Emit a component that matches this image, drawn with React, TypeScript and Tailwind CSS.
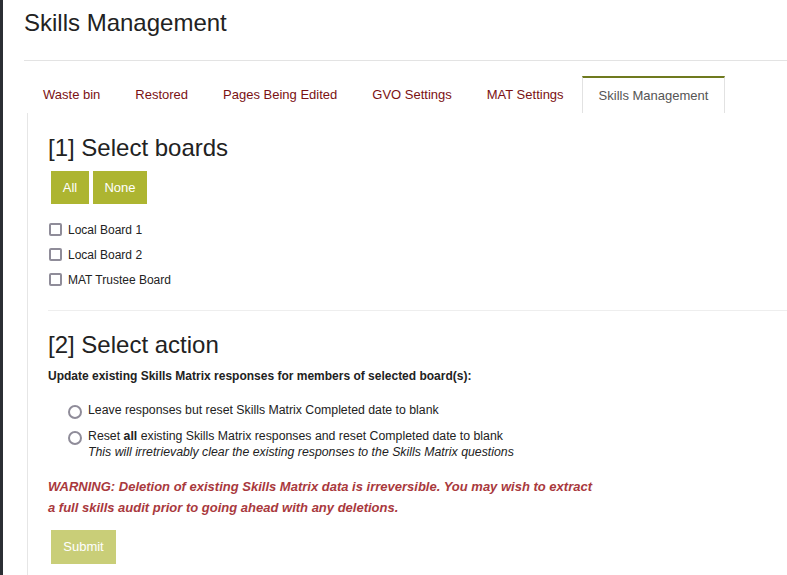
const tabs = ['Waste bin', 'Restored', 'Pages Being Edited', 'GVO Settings', 'MAT Settings', 'Skills Management'];
const boards = ['Local Board 1', 'Local Board 2', 'MAT Trustee Board'];

function Checkbox() {
  return <span className="block h-[13px] w-[13px] shrink-0 rounded-[2px] border-2 border-[#8f8c99] bg-white" />;
}

function Radio() {
  return <span className="mt-[3px] block h-[14px] w-[14px] shrink-0 rounded-full border-2 border-[#8f8c99] bg-white" />;
}

export default function App() {
  const active = 'Skills Management';

  return (
    <div className="flex min-h-screen bg-white font-['Liberation_Sans',Arial,sans-serif] text-[#333]">
      <div className="w-[3px] shrink-0 bg-[#2b2f34]" />
      <div className="flex-1 pl-[21px]">
        <h1 className="pt-[8px] text-[24px] leading-[30px] text-[#222]">Skills Management</h1>
        <div className="mt-[22px] h-px bg-[#e3e3e3]" />

        {/* Tabs */}
        <div className="mt-[15px] flex pl-[3px]">
          {tabs.map((t) =>
            t === active ? (
              <div
                key={t}
                className="-ml-px flex h-[37px] items-center border-x border-t-2 border-x-[#e2e2e2] border-t-[#6f7a1e] px-4 text-[13px] text-[#555]"
              >
                {t}
              </div>
            ) : (
              <div key={t} className="mr-[3px] flex h-[37px] items-center px-4 text-[13px] text-[#7b1113]">
                {t}
              </div>
            )
          )}
        </div>

        {/* Content */}
        <div className="ml-[3px] border-l border-[#e6e6e6] pb-[20px] pl-[20px]">
          <h2 className="pt-[21px] text-[24px] leading-[28px] text-[#222]">[1] Select boards</h2>
          <div className="ml-[3px] mt-[9px] flex gap-[4px]">
            <button className="h-[33px] w-[38px] bg-[#adb531] text-[13px] text-white">All</button>
            <button className="h-[33px] w-[54px] bg-[#adb531] text-[13px] text-white">None</button>
          </div>

          <div className="mt-[13px]">
            {boards.map((b) => (
              <label key={b} className="ml-[1px] flex h-[25px] items-center gap-[6px] text-[12px] text-[#222]">
                <Checkbox />
                <span>{b}</span>
              </label>
            ))}
          </div>

          <div className="mt-[18px] h-px bg-[#eeeeee]" />

          <h2 className="mt-[20px] text-[24px] leading-[28px] text-[#222]">[2] Select action</h2>
          <div className="mt-[9px] text-[12px] font-bold leading-[16px] text-[#222]">
            Update existing Skills Matrix responses for members of selected board(s):
          </div>

          <div className="ml-[20px] mt-[18px] text-[12.3px] leading-[16px] text-[#222]">
            <label className="flex gap-[6px]">
              <Radio />
              <span>Leave responses but reset Skills Matrix Completed date to blank</span>
            </label>
            <label className="mt-[9px] flex gap-[6px]">
              <Radio />
              <span>
                Reset <b>all</b> existing Skills Matrix responses and reset Completed date to blank
                <br />
                <i>This will irretrievably clear the existing responses to the Skills Matrix questions</i>
              </span>
            </label>
          </div>

          <p className="mt-[16px] max-w-[600px] text-[13px] font-bold italic leading-[21px] text-[#a9393d]">
            WARNING: Deletion of existing Skills Matrix data is irreversible. You may wish to extract
            <br />
            a full skills audit prior to going ahead with any deletions.
          </p>

          <button className="ml-[3px] mt-[12px] h-[34px] w-[65px] bg-[#adb531] text-[13px] text-white opacity-65">
            Submit
          </button>
        </div>
      </div>
    </div>
  );
}
